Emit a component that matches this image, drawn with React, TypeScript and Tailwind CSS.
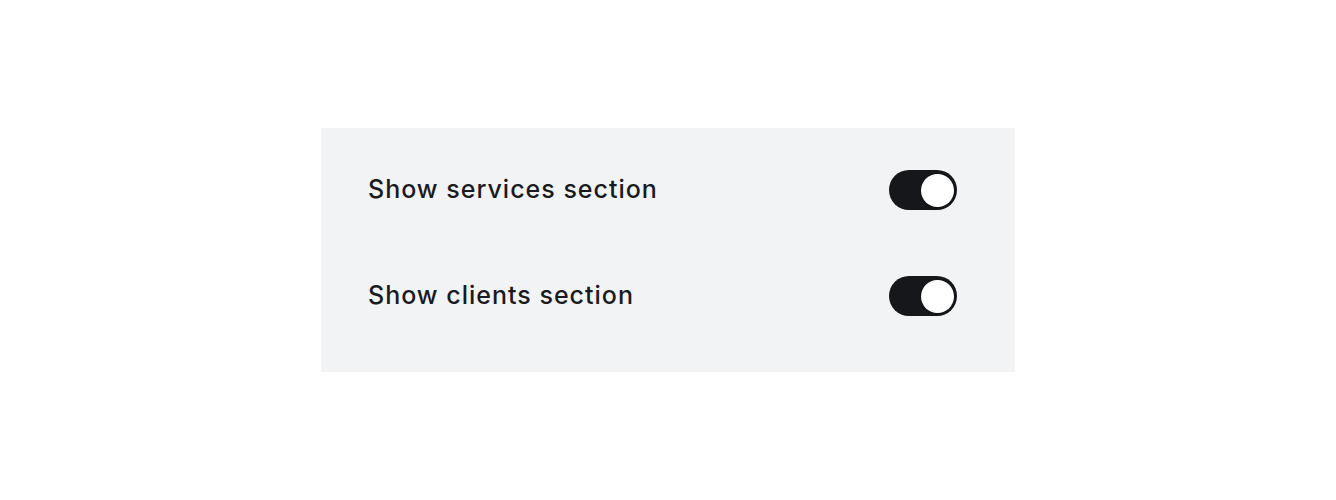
import { useState } from 'react';

function Toggle({ on, onChange }: { on: boolean; onChange: () => void }) {
  return (
    <button
      type="button"
      onClick={onChange}
      className={`relative h-[40px] w-[68px] shrink-0 rounded-full transition-colors ${on ? 'bg-[#16171b]' : 'bg-[#c9cbd1]'}`}
    >
      <span
        className={`absolute top-[3.5px] h-[33px] w-[33px] rounded-full bg-white shadow-[0_2px_3px_rgba(0,0,0,0.18)] transition-all ${on ? 'left-[32px]' : 'left-[3px]'}`}
      />
    </button>
  );
}

export default function App() {
  const [services, setServices] = useState(true);
  const [clients, setClients] = useState(true);

  return (
    <div className="flex min-h-[500px] items-center justify-center bg-white" style={{ fontFamily: 'Inter, "Noto Sans", sans-serif' }}>
      <div className="flex w-[694px] flex-col gap-[66px] bg-[#f2f3f5] pb-[56px] pl-[47px] pr-[58px] pt-[42px]">
        <div className="flex items-center justify-between">
          <span className="text-[25px] font-medium tracking-[0.04em] text-[#1a1b1f]">Show services section</span>
          <Toggle on={services} onChange={() => setServices(!services)} />
        </div>
        <div className="flex items-center justify-between">
          <span className="text-[25px] font-medium tracking-[0.04em] text-[#1a1b1f]">Show clients section</span>
          <Toggle on={clients} onChange={() => setClients(!clients)} />
        </div>
      </div>
    </div>
  );
}
